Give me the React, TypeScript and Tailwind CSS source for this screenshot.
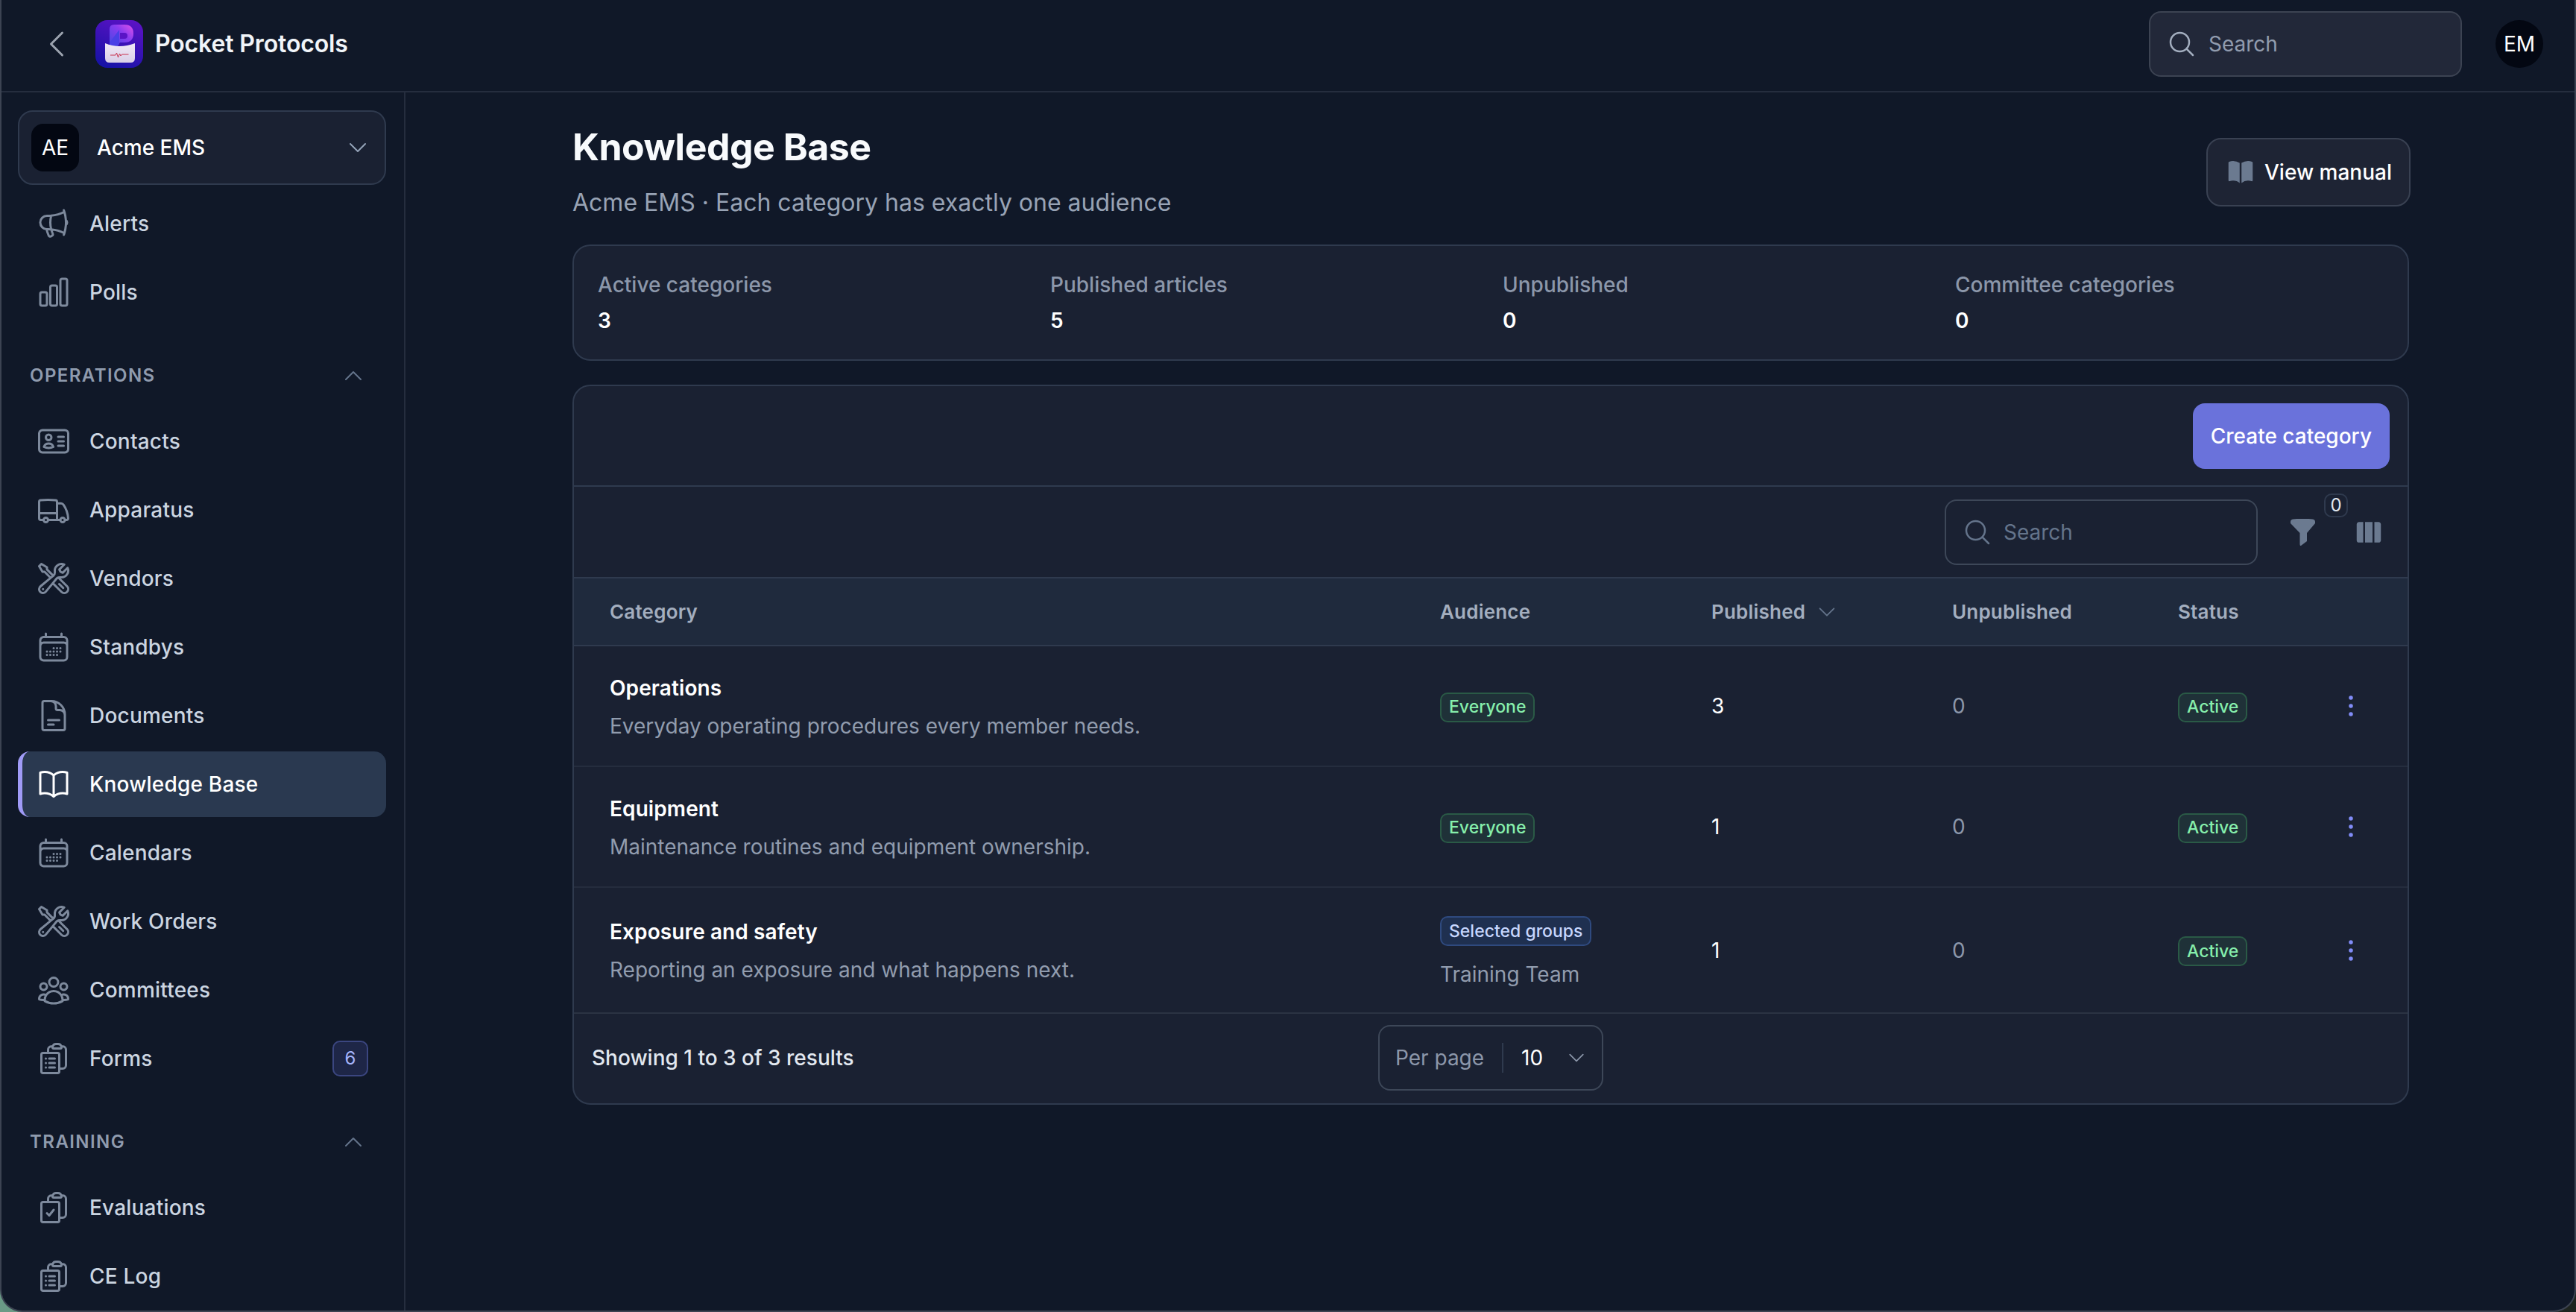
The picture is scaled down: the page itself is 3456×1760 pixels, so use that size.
import type { ReactNode } from 'react';
import {
  HiBookOpen,
  HiOutlineBookOpen,
  HiOutlineCalendarDays,
  HiOutlineChartBar,
  HiOutlineChevronDown,
  HiOutlineChevronLeft,
  HiOutlineChevronUp,
  HiOutlineClipboardDocumentCheck,
  HiOutlineClipboardDocumentList,
  HiOutlineDocumentText,
  HiOutlineEllipsisVertical,
  HiOutlineIdentification,
  HiOutlineMagnifyingGlass,
  HiOutlineMegaphone,
  HiOutlineTruck,
  HiOutlineUserGroup,
  HiOutlineWrenchScrewdriver,
  HiViewColumns,
} from 'react-icons/hi2';
import type { IconType } from 'react-icons';

const Logo = () => (
  <svg viewBox="0 0 64 64" className="h-16 w-16 shrink-0">
    <defs>
      <linearGradient id="logoBg" x1="0.7" y1="0" x2="0.3" y2="1">
        <stop offset="0" stopColor="#5a12c4" />
        <stop offset="1" stopColor="#1712a6" />
      </linearGradient>
      <linearGradient id="logoP" x1="0" y1="1" x2="1" y2="0">
        <stop offset="0" stopColor="#3f48e0" />
        <stop offset="0.6" stopColor="#8b3cf0" />
        <stop offset="1" stopColor="#e052e8" />
      </linearGradient>
      <linearGradient id="logoPocket" x1="0" y1="0" x2="0" y2="1">
        <stop offset="0" stopColor="#f1e9f6" />
        <stop offset="1" stopColor="#d9cfe8" />
      </linearGradient>
    </defs>
    <rect width="64" height="64" rx="16" fill="url(#logoBg)" />
    <path d="M19 36V12q0-6 6-6h14q12 0 12 12t-12 12h-6l-5 6z" fill="url(#logoP)" />
    <path d="M19 36V30L32 13V32l-4 5z" fill="#4a3fe6" />
    <path d="M33 17h6q4 0 4 4t-4 4h-6z" fill="#5a14c6" />
    <path d="M13 31q19 8 40 0v20q0 6-6 6H19q-6 0-6-6z" fill="url(#logoPocket)" />
    <path d="M20 47h7l1.5-3 2 6 2-5 1.5 3 1.5-2h9" fill="none" stroke="#c8324f" strokeWidth="1" />
  </svg>
);

const FunnelIcon = () => (
  <svg viewBox="0 0 33 36" className="h-9 w-[33px] text-[#6b7a90]" fill="currentColor">
    <path d="M3 .5Q16.5-1 30 .5 33 1 33 4V6L22 19V30L14 36Q12.5 36.5 12.5 34V19L0 6V4Q0 1 3 .5Z" />
  </svg>
);

type NavEntry = { label: string; icon: IconType; active?: boolean; badge?: string };

const topNav: NavEntry[] = [
  { label: 'Alerts', icon: HiOutlineMegaphone },
  { label: 'Polls', icon: HiOutlineChartBar },
];

const operationsNav: NavEntry[] = [
  { label: 'Contacts', icon: HiOutlineIdentification },
  { label: 'Apparatus', icon: HiOutlineTruck },
  { label: 'Vendors', icon: HiOutlineWrenchScrewdriver },
  { label: 'Standbys', icon: HiOutlineCalendarDays },
  { label: 'Documents', icon: HiOutlineDocumentText },
  { label: 'Knowledge Base', icon: HiOutlineBookOpen, active: true },
  { label: 'Calendars', icon: HiOutlineCalendarDays },
  { label: 'Work Orders', icon: HiOutlineWrenchScrewdriver },
  { label: 'Committees', icon: HiOutlineUserGroup },
  { label: 'Forms', icon: HiOutlineClipboardDocumentList, badge: '6' },
];

const trainingNav: NavEntry[] = [
  { label: 'Evaluations', icon: HiOutlineClipboardDocumentCheck },
  { label: 'CE Log', icon: HiOutlineClipboardDocumentList },
];

const NavItem = ({ label, icon: Icon, active, badge }: NavEntry) => (
  <div
    className={`flex h-[88px] shrink-0 items-center gap-6 rounded-[16px] pr-6 text-[28px] font-medium tracking-[0.2px] ${
      active
        ? 'border-l-[6px] border-[#a09bf7] bg-[#2a3950] pl-[18px] text-white'
        : 'pl-6 text-[#cbd5e1]'
    }`}
  >
    <Icon className={`h-12 w-12 shrink-0 ${active ? 'text-white' : 'text-[#7d899c]'}`} />
    <span>{label}</span>
    {badge && (
      <span className="ml-auto flex h-12 w-12 items-center justify-center rounded-[10px] border-2 border-[#3b4680] bg-[#1e2647] text-[24px] font-normal text-[#a5b4fc]">
        {badge}
      </span>
    )}
  </div>
);

const SectionLabel = ({ children }: { children: ReactNode }) => (
  <div className="mt-[44px] mb-5 flex h-10 shrink-0 items-center justify-between pr-[28px] pl-[16px]">
    <span className="text-[24px] font-semibold tracking-[0.06em] text-[#8f9bae]">{children}</span>
    <HiOutlineChevronUp className="h-8 w-8 text-[#64748b]" />
  </div>
);

const Sidebar = () => (
  <aside className="flex w-[542px] shrink-0 flex-col gap-1 overflow-hidden border-r-2 border-[#252d3e] pt-6 pr-6 pl-[22px]">
    <div className="mb-1 flex h-[100px] shrink-0 items-center gap-6 rounded-[20px] border-2 border-[#2f3a4e] bg-[#1a2132] pr-[20px] pl-4 text-[28px] font-medium text-white">
      <span className="flex h-16 w-16 items-center justify-center rounded-[16px] bg-[#030712] font-normal">AE</span>
      <span>Acme EMS</span>
      <HiOutlineChevronDown className="ml-auto h-8 w-8 text-[#94a3b8]" />
    </div>
    {topNav.map((item) => (
      <NavItem key={item.label} {...item} />
    ))}
    <SectionLabel>OPERATIONS</SectionLabel>
    {operationsNav.map((item) => (
      <NavItem key={item.label} {...item} />
    ))}
    <SectionLabel>TRAINING</SectionLabel>
    {trainingNav.map((item) => (
      <NavItem key={item.label} {...item} />
    ))}
  </aside>
);

const Stat = ({ label, value }: { label: string; value: string }) => (
  <div>
    <div className="text-[28px] leading-10 font-medium text-[#8c97aa]">{label}</div>
    <div className="mt-2 text-[28px] leading-10 font-semibold text-white">{value}</div>
  </div>
);

const Badge = ({ tone, children }: { tone: 'green' | 'blue'; children: ReactNode }) => (
  <span
    className={`inline-flex h-10 items-center rounded-[10px] border-2 px-[10px] text-[23px] font-medium ${
      tone === 'green'
        ? 'border-[#2a5a46] bg-[#1f3138] text-[#86efac]'
        : 'border-[#2f4a7f] bg-[#1f3050] text-[#c7d7fe]'
    }`}
  >
    {children}
  </span>
);

const rowGrid = 'grid grid-cols-[1114px_364px_323px_303px_200px_64px] items-center pl-12';

type Category = {
  name: string;
  description: string;
  audience: string;
  team?: string;
  published: string;
};

const categories: Category[] = [
  {
    name: 'Operations',
    description: 'Everyday operating procedures every member needs.',
    audience: 'Everyone',
    published: '3',
  },
  {
    name: 'Equipment',
    description: 'Maintenance routines and equipment ownership.',
    audience: 'Everyone',
    published: '1',
  },
  {
    name: 'Exposure and safety',
    description: 'Reporting an exposure and what happens next.',
    audience: 'Selected groups',
    team: 'Training Team',
    published: '1',
  },
];

const CategoryRow = ({ category }: { category: Category }) => (
  <div
    className={`${rowGrid} border-b-2 ${
      category.team ? 'h-[169px] border-[#2b3343]' : 'h-[162px] border-[#252d3e]'
    }`}
  >
    <div className="pt-[2px]">
      <div className="text-[28px] leading-10 font-semibold tracking-[0.1px] text-white">{category.name}</div>
      <div className="mt-[11px] text-[28px] leading-10 text-[#919cae]">{category.description}</div>
    </div>
    <div className={`flex flex-col items-start ${category.team ? 'pt-[7px]' : 'pt-[3px]'}`}>
      <Badge tone={category.team ? 'blue' : 'green'}>{category.audience}</Badge>
      {category.team && <div className="mt-[18px] text-[28px] leading-10 text-[#919cae]">{category.team}</div>}
    </div>
    <div className="text-[28px] text-white">{category.published}</div>
    <div className="text-[28px] text-[#8c97aa]">0</div>
    <div className="flex pt-[3px]">
      <Badge tone="green">Active</Badge>
    </div>
    <div className="flex justify-center">
      <HiOutlineEllipsisVertical className="h-11 w-11 text-[#818cf8]" />
    </div>
  </div>
);

const CategoryTable = () => (
  <div className="mt-8 h-[966px] overflow-hidden rounded-[24px] border-2 border-[#2f3a4e] bg-[#1a2132]">
    <div className="flex h-[135px] items-center justify-end border-b-2 border-[#2f3a4e] pr-6">
      <button className="h-[88px] rounded-[16px] bg-[#6a72db] px-6 text-[28px] font-medium text-white">
        Create category
      </button>
    </div>
    <div className="flex h-[123px] items-center justify-end border-b-2 border-[#2f3a4e] pr-8">
      <div className="flex h-[88px] w-[420px] items-center gap-[15px] rounded-[16px] border-2 border-[#3d4758] pl-[22px]">
        <HiOutlineMagnifyingGlass className="h-10 w-10 text-[#64748b]" />
        <span className="text-[28px] text-[#64748b]">Search</span>
      </div>
      <div className="relative ml-[44px] h-9 w-[33px]">
        <FunnelIcon />
        <span className="absolute -top-[34px] left-[45px] flex h-[32px] w-[32px] items-center justify-center rounded-[10px] border-2 border-[#2f3a4e] bg-[#1a2132] text-[24px] text-[#e2e8f0]">
          0
        </span>
      </div>
      <HiViewColumns className="ml-[52px] h-10 w-10 text-[#6b7a90]" />
    </div>
    <div className={`${rowGrid} h-[91px] border-b-2 border-[#2f3a4e] bg-[#1f2a3d] text-[26px] font-semibold tracking-[0.2px] text-[#a3aebf]`}>
      <div>Category</div>
      <div>Audience</div>
      <div className="flex items-center gap-[14px]">
        Published
        <HiOutlineChevronDown className="h-[30px] w-[30px] text-[#64748b]" />
      </div>
      <div>Unpublished</div>
      <div>Status</div>
    </div>
    {categories.map((category) => (
      <CategoryRow key={category.name} category={category} />
    ))}
    <div className="grid h-[118px] grid-cols-3 items-center">
      <div className="pl-6 text-[28px] font-medium text-[#e2e8f0]">Showing 1 to 3 of 3 results</div>
      <div className="flex h-[88px] w-[302px] items-center justify-self-center rounded-[16px] border-2 border-[#3d4758] pr-[20px] pl-[21px] text-[28px]">
        <span className="text-[#8c97aa]">Per page</span>
        <span className="mx-6 h-10 w-0.5 bg-[#2f3a4e]" />
        <span className="text-white">10</span>
        <HiOutlineChevronDown className="ml-auto h-7 w-7 text-[#8c97aa]" />
      </div>
    </div>
  </div>
);

export default function App() {
  return (
    <div className="h-[1760px] w-[3456px] overflow-hidden bg-[linear-gradient(90deg,#6a9a86_0%,#1e241f_100%)] font-['Inter',sans-serif]">
      <div className="flex h-full flex-col overflow-hidden rounded-b-[30px] border-x-2 border-b-2 border-[#3c4352] bg-[#101828]">
        <header className="flex h-[124px] shrink-0 items-center border-b-2 border-[#252d3e] pr-[42px] pb-[4px] pl-[50px]">
          <HiOutlineChevronLeft className="h-12 w-12 text-[#9ca3af]" />
          <span className="ml-7">
            <Logo />
          </span>
          <span className="ml-4 text-[32px] font-semibold tracking-[-0.14px] text-[#f1f5f9]">Pocket Protocols</span>
          <div className="ml-auto flex h-[88px] w-[420px] items-center gap-4 rounded-[16px] border-2 border-[#3c4352] bg-[#222839] pl-[22px]">
            <HiOutlineMagnifyingGlass className="h-10 w-10 text-[#a3aebf]" />
            <span className="text-[28px] text-[#919cae]">Search</span>
          </div>
          <span className="ml-[45px] flex h-16 w-16 items-center justify-center rounded-full bg-[#030712] text-[28px] text-white">
            EM
          </span>
        </header>
        <div className="flex min-h-0 flex-1">
          <Sidebar />
          <main className="ml-[224px] w-[2464px] shrink-0 pt-[41px]">
            <div className="flex items-center justify-between">
              <div>
                <h1 className="text-[50px] leading-16 font-bold tracking-[-0.5px] text-[#f8fafc]">Knowledge Base</h1>
                <p className="mt-[19px] text-[32px] leading-12 text-[#98a3b5]">
                  Acme EMS · Each category has exactly one audience
                </p>
              </div>
              <button className="-mr-[2px] flex h-[92px] w-[274px] items-center gap-3 rounded-[20px] border-2 border-[#394152] bg-[#1e2434] pl-6 text-[28px] font-medium text-white">
                <HiBookOpen className="h-10 w-10 text-[#6b7a90]" />
                View manual
              </button>
            </div>
            <div className="mt-8 grid h-[156px] grid-cols-4 gap-8 rounded-[24px] border-2 border-[#2f3a4e] bg-[#1a2132] p-8">
              <Stat label="Active categories" value="3" />
              <Stat label="Published articles" value="5" />
              <Stat label="Unpublished" value="0" />
              <Stat label="Committee categories" value="0" />
            </div>
            <CategoryTable />
          </main>
        </div>
      </div>
    </div>
  );
}
